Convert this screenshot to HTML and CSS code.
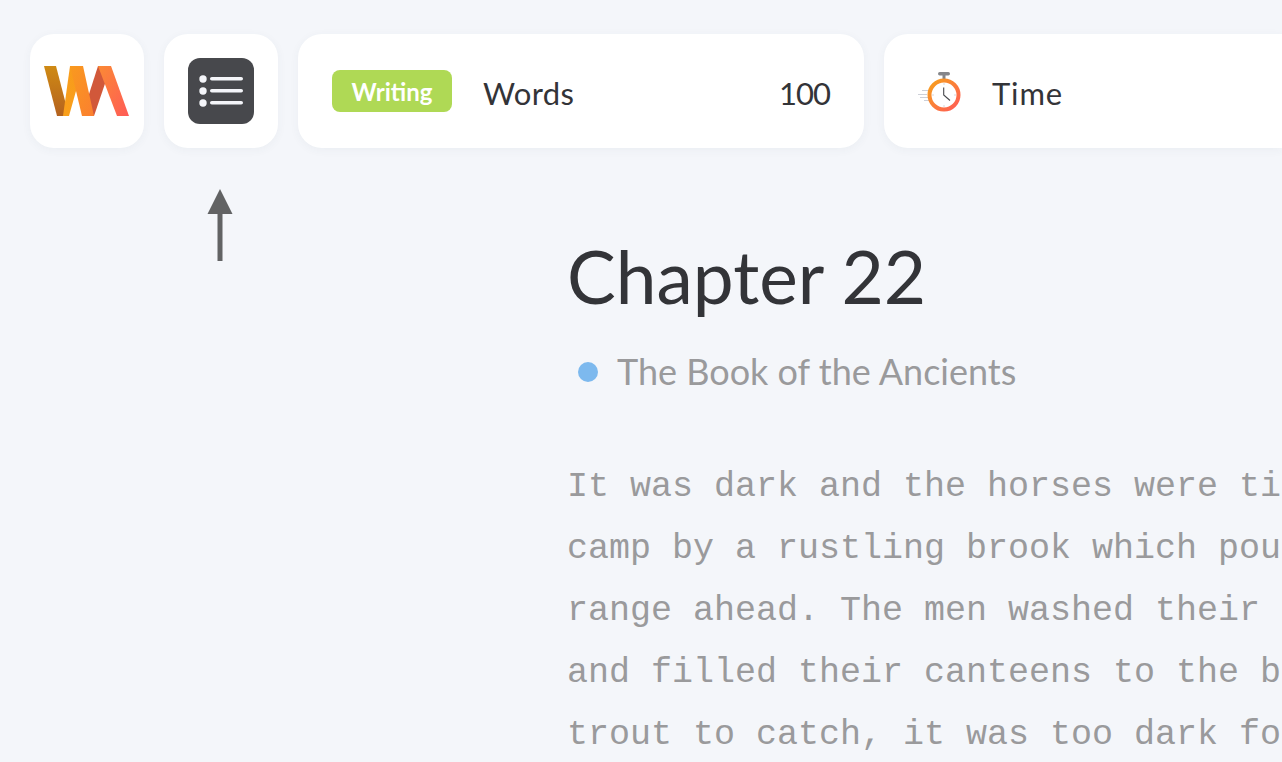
FILE: index.html
```html
<!DOCTYPE html>
<html lang="en">
<head>
    <meta charset="UTF-8">
    <title>Chapter 22</title>
    <link rel="stylesheet" href="styles.css">
</head>
<body>
    <div class="top-bar">
        <div class="card square">
            <svg class="logo" width="86" height="50" viewBox="0 0 86 50">
                <defs>
                    <linearGradient id="logo-a" x1="0" y1="0" x2="0" y2="1">
                        <stop offset="0" stop-color="#cf8a14"/>
                        <stop offset="1" stop-color="#b4621f"/>
                    </linearGradient>
                    <linearGradient id="logo-b" x1="0" y1="1" x2="1" y2="0">
                        <stop offset="0" stop-color="#f9a01b"/>
                        <stop offset="1" stop-color="#f89a1c"/>
                    </linearGradient>
                    <linearGradient id="logo-c" x1="0" y1="0" x2="1" y2="1">
                        <stop offset="0" stop-color="#f99a1e"/>
                        <stop offset="1" stop-color="#fb7f30"/>
                    </linearGradient>
                    <linearGradient id="logo-d" x1="0" y1="0" x2="1" y2="1">
                        <stop offset="0" stop-color="#fb8a34"/>
                        <stop offset="1" stop-color="#ff5b57"/>
                    </linearGradient>
                </defs>
                <polygon points="0,0 12,0 25,50 13,50" fill="url(#logo-a)"/>
                <polygon points="26,0 39,0 25,50 19,50" fill="url(#logo-b)"/>
                <polygon points="38,50 50,50 67,0 54,0" fill="#d1583a"/>
                <polygon points="26,0 39,0 50,50 38,50" fill="url(#logo-c)"/>
                <polygon points="54,0 67,0 85,50 73,50" fill="url(#logo-d)"/>
            </svg>
        </div>
        <div class="card square">
            <svg width="66" height="66" viewBox="0 0 66 66">
                <rect width="66" height="66" rx="12" fill="#47484c"/>
                <circle cx="15" cy="21" r="3.7" fill="#f4f5f9"/>
                <circle cx="15" cy="33" r="3.7" fill="#f4f5f9"/>
                <circle cx="15" cy="45" r="3.7" fill="#f4f5f9"/>
                <rect x="22" y="19" width="33" height="3.6" rx="1.8" fill="#f4f5f9"/>
                <rect x="22" y="31" width="33" height="3.6" rx="1.8" fill="#f4f5f9"/>
                <rect x="22" y="43" width="33" height="3.6" rx="1.8" fill="#f4f5f9"/>
            </svg>
        </div>
        <div class="card stat">
            <span class="badge">Writing</span>
            <span class="stat-label">Words</span>
            <span class="stat-value">100</span>
        </div>
        <div class="card time">
            <svg width="46" height="42" viewBox="0 0 46 42">
                <defs>
                    <linearGradient id="timer-ring" x1="0" y1="0" x2="1" y2="1">
                        <stop offset="0" stop-color="#f7a11b"/>
                        <stop offset="1" stop-color="#ff5b57"/>
                    </linearGradient>
                </defs>
                <rect x="20" y="2" width="12" height="3.5" rx="1.7" fill="#85868a"/>
                <rect x="24.5" y="5" width="3" height="4" fill="#85868a"/>
                <g stroke="#cdd0d8" stroke-width="1">
                    <line x1="4" y1="20.5" x2="11" y2="20.5"/>
                    <line x1="0" y1="24.5" x2="9" y2="24.5"/>
                    <line x1="2" y1="27.5" x2="10" y2="27.5"/>
                    <line x1="6" y1="30.5" x2="11" y2="30.5"/>
                </g>
                <circle cx="26" cy="25" r="14.5" fill="#fff" stroke="url(#timer-ring)" stroke-width="4"/>
                <g stroke="#d5d7dc" stroke-width="1">
                    <line x1="26" y1="13" x2="26" y2="15"/>
                    <line x1="26" y1="35" x2="26" y2="37"/>
                    <line x1="14" y1="25" x2="16" y2="25"/>
                    <line x1="36" y1="25" x2="38" y2="25"/>
                </g>
                <path d="M25.7 17.5v7.5l6.3 5.5" fill="none" stroke="#47484c" stroke-width="1.1"/>
            </svg>
            <span class="stat-label">Time</span>
        </div>
    </div>

    <div class="page">
        <div class="arrow-col">
            <svg width="26" height="72" viewBox="0 0 26 72">
                <polygon points="13,0 25.5,25 0.5,25" fill="#626364"/>
                <rect x="10.5" y="24" width="5" height="48" fill="#626364"/>
            </svg>
        </div>
        <div class="chapter">
            <h1 class="chapter-title">Chapter 22</h1>
            <div class="book">
                <span class="book-dot"></span>
                <span>The Book of the Ancients</span>
            </div>
            <div class="chapter-text">
                <p>It was dark and the horses were ti</p>
                <p>camp by a rustling brook which pou</p>
                <p>range ahead. The men washed their</p>
                <p>and filled their canteens to the b</p>
                <p>trout to catch, it was too dark fo</p>
            </div>
        </div>
    </div>
</body>
</html>
```

FILE: styles.css
```css
html, body {
    height: 100%;
}
body {
    margin: 0;
    overflow: hidden;
    font-family: "Lato", sans-serif;
    background-color: #f4f6fa;
    color: #333438;
}
.top-bar {
    display: flex;
    gap: 20px;
    padding: 34px 0 0 30px;
}
.card {
    display: flex;
    align-items: center;
    flex-shrink: 0;
    height: 114px;
    box-sizing: border-box;
    background-color: #fff;
    border-radius: 24px;
    box-shadow: 0 2px 10px rgba(60, 70, 100, 0.05);
}
.square {
    width: 114px;
    justify-content: center;
}
.logo {
    display: block;
}
.stat {
    width: 566px;
    padding: 0 34px;
}
.time {
    flex: 1;
    padding-left: 34px;
    border-radius: 24px 0 0 24px;
}
.time .stat-label {
    margin-left: 28px;
    letter-spacing: 0.9px;
}
.badge {
    width: 120px;
    height: 42px;
    line-height: 43px;
    text-align: center;
    background-color: #afd955;
    border-radius: 8px;
    color: #fff;
    font-size: 24px;
    font-weight: 700;
}
.stat-label {
    margin-left: 31px;
    padding-top: 4px;
    font-size: 31px;
    letter-spacing: 0.4px;
}
.stat-value {
    margin-left: auto;
    padding-top: 4px;
    font-size: 31px;
    letter-spacing: -1px;
}
.page {
    display: flex;
    padding-top: 41px;
}
.arrow-col {
    width: 568px;
    flex-shrink: 0;
    padding-left: 207px;
    box-sizing: border-box;
}
.arrow-col svg {
    display: block;
}
.chapter {
    white-space: nowrap;
}
.chapter-title {
    margin: 44px 0 0 -1px;
    font-size: 73px;
    font-weight: 400;
    line-height: 86px;
}
.book {
    display: flex;
    align-items: center;
    gap: 19px;
    margin: 29px 0 0 10px;
    font-size: 36px;
    line-height: 46px;
    color: #9a9a9c;
}
.book-dot {
    width: 20px;
    height: 20px;
    margin-top: 2px;
    border-radius: 50%;
    background-color: #7db9ee;
}
.chapter-text {
    margin: 62px 0 0 -1px;
    font-family: "Liberation Mono", monospace;
    font-size: 35px;
    line-height: 62px;
    color: #9a9a9c;
}
.chapter-text p {
    margin: 0;
}
```
